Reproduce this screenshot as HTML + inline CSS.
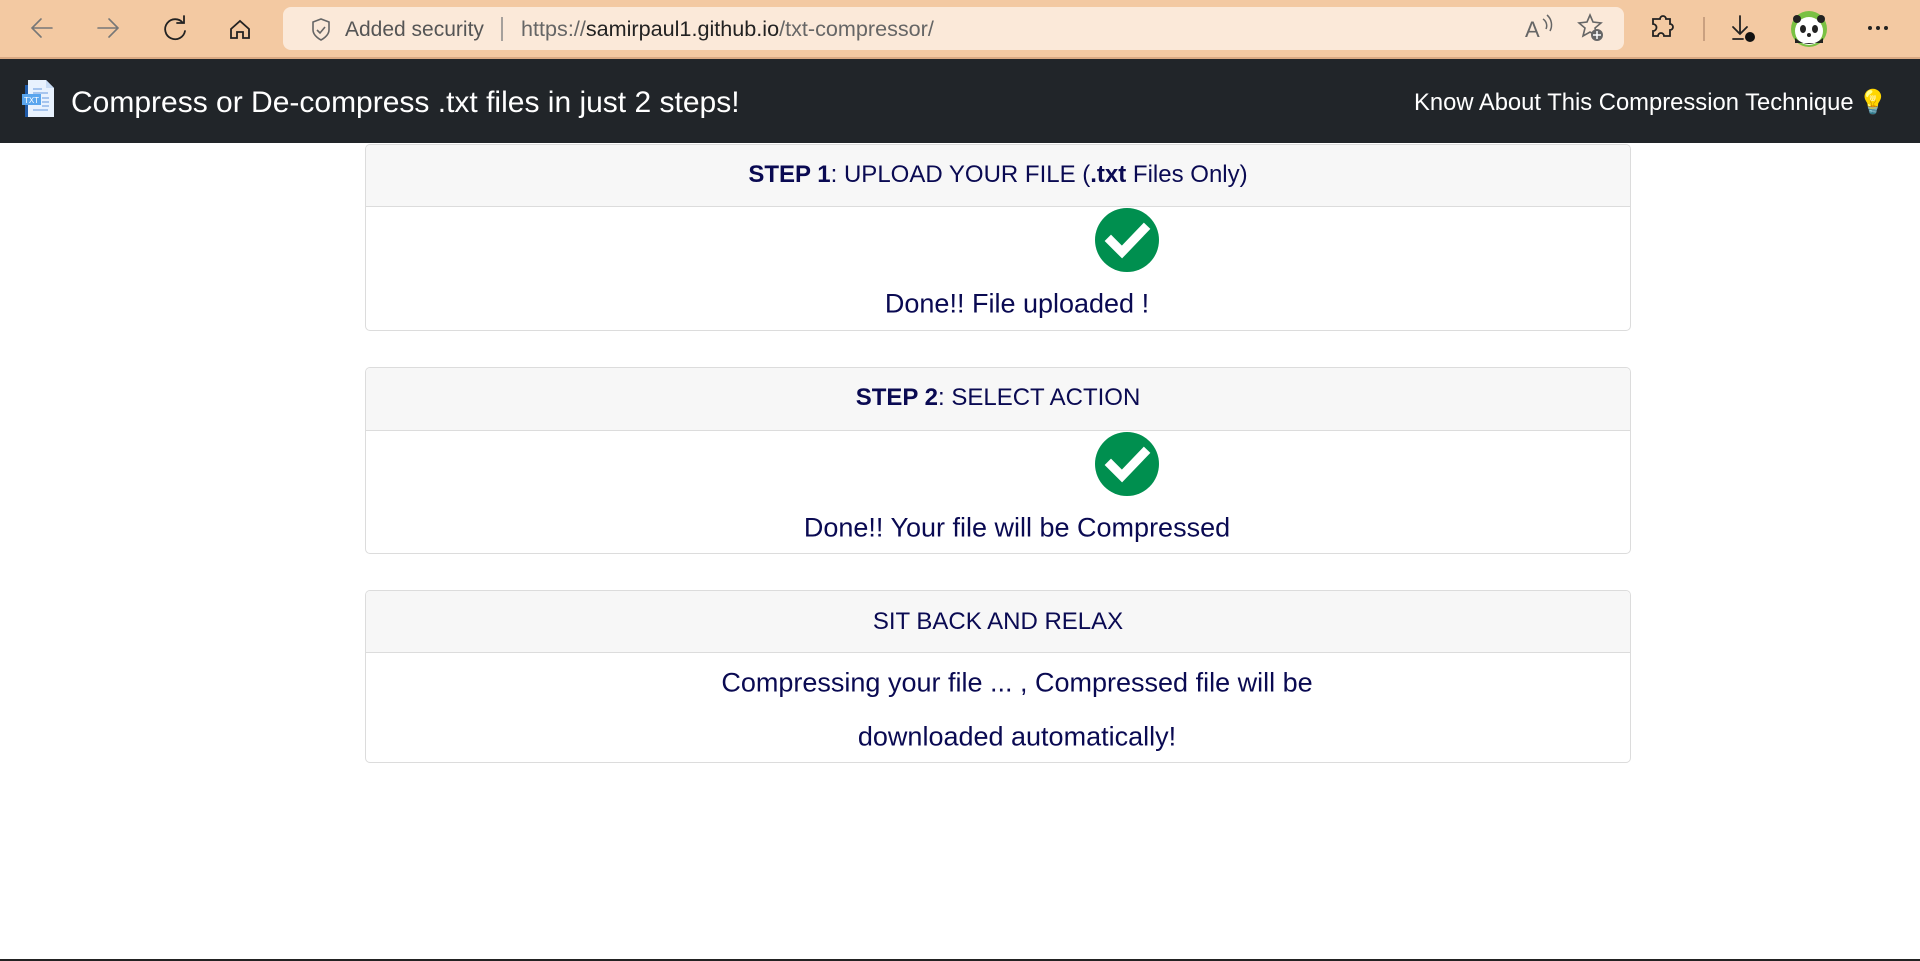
<!DOCTYPE html>
<html><head><meta charset="utf-8"><style>
*{margin:0;padding:0;box-sizing:border-box}
body{width:1920px;height:961px;overflow:hidden;background:#fff;font-family:"Liberation Sans",Arial,sans-serif;position:relative}
.abs{position:absolute}
.bar{left:0;top:0;width:1920px;height:59px;background:#f3c9a2;border-bottom:2px solid #d9a983}
.addr{left:283px;top:7px;width:1341px;height:43px;background:#fbe9d9;border-radius:8px}
.nav{left:0;top:59px;width:1920px;height:84px;background:#212529}
.card{left:365px;width:1266px;border:1px solid #dcdcdc;border-radius:5px;overflow:hidden;background:#fff}
.hd{background:#f7f7f7;border-bottom:1px solid #dcdcdc;height:62px}
.t{position:absolute;white-space:nowrap;transform:translate(-50%,-50%);color:#0a0a52}
.hdt{font-size:24px}
.bt{font-size:27px}
</style></head><body>
<div class="abs bar"></div>
<div class="abs addr"></div>
<svg class="abs" style="left:0;top:0" width="1920" height="59">
<g fill="none" stroke="#777" stroke-width="1.6" stroke-linecap="round">
<path d="M52 28H32M41 19l-9 9 9 9"/>
<path d="M98 28h20M109 19l9 9-9 9"/>
</g>
<g fill="none" stroke="#222" stroke-width="1.8" stroke-linecap="round">
<path d="M183 23a10 10 0 1 0 2 8M184 16v7h-7"/>
<path d="M231 29l9-8 9 8v9h-6v-6h-6v6h-6z"/>
<path d="M1660 19a3 3 0 0 1 6 0h4v5a3 3 0 0 1 0 6v6h-6a3 3 0 0 0-6 0h-5v-5a3 3 0 0 0 0-7v-5z"/>
<path d="M1740 16v18M1733 27l7 7 7-7M1733 39h10"/>
</g>
<circle cx="1750" cy="37" r="5" fill="#111"/>
<path d="M329 22l-8-3-8 3v8c0 6 8 10 8 10s8-4 8-10z" fill="none" stroke="#666" stroke-width="1.6"/>
<path d="M317 30l3 3 5-6" fill="none" stroke="#666" stroke-width="1.6"/>
<line x1="502" y1="17" x2="502" y2="41" stroke="#888" stroke-width="1.5"/>
<text x="345" y="36" font-family="Liberation Sans" font-size="21" fill="#555">Added security</text>
<text x="521" y="36" font-family="Liberation Sans" font-size="21.6" fill="#666">https://<tspan fill="#222">samirpaul1.github.io</tspan>/txt-compressor/</text>
<text x="1525" y="37" font-family="Liberation Sans" font-size="22" fill="#666">A</text>
<path d="M1543 19a8 8 0 0 1 3 10M1547 15a13 13 0 0 1 3 16" stroke="#666" fill="none" stroke-width="1.5"/>
<path d="M1590 15l3 7 8 1-6 5 2 8-7-4-7 4 2-8-6-5 8-1z" fill="none" stroke="#666" stroke-width="1.6"/>
<circle cx="1597" cy="35" r="6" fill="#666"/><path d="M1597 31v8M1593 35h8" stroke="#fff" stroke-width="1.5"/>
<line x1="1704" y1="17" x2="1704" y2="41" stroke="#c9a080" stroke-width="2"/>
<circle cx="1809" cy="29" r="18" fill="#7ac143"/>
<circle cx="1809" cy="31" r="14" fill="#fff"/>
<path d="M1795 38q14 12 28 0v5h-28z" fill="#222"/>
<circle cx="1797" cy="19" r="4" fill="#222"/><circle cx="1821" cy="19" r="4" fill="#222"/>
<ellipse cx="1803" cy="29" rx="3" ry="4" fill="#222"/><ellipse cx="1815" cy="29" rx="3" ry="4" fill="#222"/>
<circle cx="1809" cy="35" r="2" fill="#222"/>
<g fill="#222"><circle cx="1870" cy="28" r="2"/><circle cx="1878" cy="28" r="2"/><circle cx="1886" cy="28" r="2"/></g>
</svg>
<div class="abs nav"></div>
<svg class="abs" style="left:18px;top:77px" width="44" height="44">
<rect x="7" y="8" width="26" height="32" fill="#1e5aa8"/>
<path d="M10 3h18l8 8v29H10z" fill="#e8f2fe"/>
<path d="M28 3v8h8" fill="#c8dcf5"/>
<g stroke="#8fb6e8" stroke-width="1.5"><path d="M15 12h9M15 16h15M24 21h7M24 25h7M24 29h7M15 33h15"/></g>
<rect x="4" y="17" width="19" height="11" fill="#5aa6ee"/>
<text x="13.5" y="26" font-size="8" fill="#fff" text-anchor="middle" font-family="Liberation Sans">TXT</text>
</svg>
<div class="abs" style="left:71px;top:86px;font-size:30px;color:#fff;white-space:nowrap">Compress or De-compress .txt files in just 2 steps!</div>
<div class="abs" style="left:1414px;top:88px;font-size:23.8px;color:#fff;white-space:nowrap">Know About This Compression Technique&thinsp;<span style="color:#f5c542">💡</span></div>

<div class="abs card" style="top:144px;height:187px"><div class="hd"></div></div>
<div class="abs card" style="top:367px;height:187px"><div class="hd" style="height:63px"></div></div>
<div class="abs card" style="top:590px;height:173px"><div class="hd"></div></div>

<div class="t hdt" style="left:998px;top:175px"><b>STEP 1</b>: UPLOAD YOUR FILE (<b>.txt</b> Files Only)</div>
<div class="t hdt" style="left:998px;top:398px"><b>STEP 2</b>: SELECT ACTION</div>
<div class="t hdt" style="left:998px;top:622px">SIT BACK AND RELAX</div>

<svg class="abs" style="left:1095px;top:208px" width="64" height="64"><circle cx="32" cy="32" r="32" fill="#008f4f"/><path d="M16 33l11 11 22-23" fill="none" stroke="#fff" stroke-width="9" stroke-linecap="square"/></svg>
<svg class="abs" style="left:1095px;top:432px" width="64" height="64"><circle cx="32" cy="32" r="32" fill="#008f4f"/><path d="M16 33l11 11 22-23" fill="none" stroke="#fff" stroke-width="9" stroke-linecap="square"/></svg>

<div class="t bt" style="left:1017px;top:304px">Done!! File uploaded !</div>
<div class="t bt" style="left:1017px;top:528px">Done!! Your file will be Compressed</div>
<div class="t bt" style="left:1017px;top:683px">Compressing your file ... , Compressed file will be</div>
<div class="t bt" style="left:1017px;top:737px">downloaded automatically!</div>

<div class="abs" style="left:0;top:959px;width:1920px;height:2px;background:#222"></div>
</body></html>
